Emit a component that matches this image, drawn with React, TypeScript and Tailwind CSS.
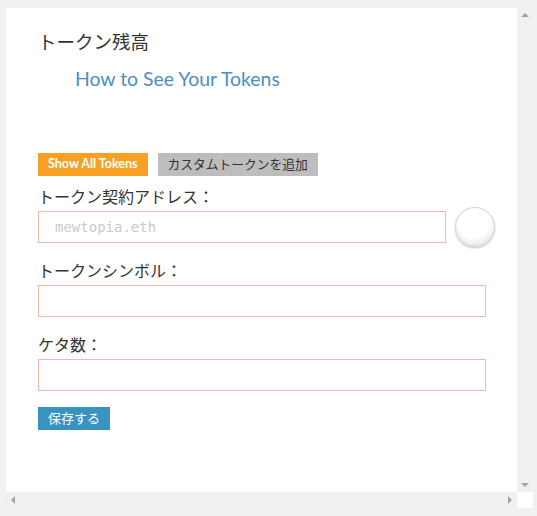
import React from "react";

const font = { fontFamily: "Lato, 'Noto Sans CJK JP', sans-serif" };

function Field({ label, placeholder, withOrb = false }: { label: string; placeholder?: string; withOrb?: boolean }) {
  return (
    <div className="flex flex-col">
      <label className="text-[16px] leading-[22px] text-[#333]">{label}</label>
      <div className="mt-[3px] flex h-[32px] items-center gap-[9px]">
        <input
          placeholder={placeholder}
          className={`h-[32px] border border-[#f5b7b1] bg-white px-[16px] text-[14px] text-[#333] outline-none placeholder:text-[#cbcbcb] ${withOrb ? "w-[408px]" : "w-[448px]"}`}
          style={{ fontFamily: "'DejaVu Sans Mono', monospace" }}
        />
        {withOrb && (
          <div className="h-[40px] w-[40px] shrink-0 rounded-full border border-[#d4d4d4] bg-[radial-gradient(circle_at_48%_38%,#ffffff_50%,#eeeeee_70%,#bdbdbd_100%)] shadow-[0_1px_2px_rgba(0,0,0,0.25)]" />
        )}
      </div>
    </div>
  );
}

export default function App() {
  return (
    <div className="h-[516px] w-[537px] overflow-hidden bg-[#f1f1f1] pl-[6px] pt-[8px]" style={font}>
      <div className="flex h-[500px] w-[527px] flex-col">
        <div className="flex h-[484px]">
          <div className="w-[511px] bg-white pl-[32px] pt-[22px]">
            <h1 className="text-[18.5px] leading-[24px] text-[#333]">トークン残高</h1>
            <a className="ml-[37px] mt-[13px] block text-[19.4px] leading-[24px] text-[#4a90c0]">How to See Your Tokens</a>

            <div className="mt-[62px] flex gap-[10px]">
              <button className="h-[23px] bg-[#f7a024] px-[10px] text-[12.5px] font-bold text-white">Show All Tokens</button>
              <button className="h-[23px] bg-[#bdbdbd] px-[10px] text-[12.75px] text-[#333]">カスタムトークンを追加</button>
            </div>

            <div className="mt-[10px] flex flex-col gap-[17px]">
              <Field label="トークン契約アドレス：" placeholder="mewtopia.eth" withOrb />
              <Field label="トークンシンボル：" />
              <Field label="ケタ数：" />
            </div>

            <button className="mt-[16px] h-[23px] bg-[#3993c1] px-[10px] text-[13px] text-white">保存する</button>
          </div>
          <div className="flex w-[16px] flex-col items-center justify-between bg-[#f0f0f0] py-[5px]">
            <div className="h-0 w-0 border-x-[4px] border-b-[4px] border-x-transparent border-b-[#a3a3a3]" />
            <div className="h-0 w-0 border-x-[4px] border-t-[4px] border-x-transparent border-t-[#a3a3a3]" />
          </div>
        </div>
        <div className="flex h-[16px]">
          <div className="flex w-[511px] items-center justify-between bg-[#f0f0f0] px-[5px]">
            <div className="h-0 w-0 border-y-[4px] border-r-[4px] border-y-transparent border-r-[#a3a3a3]" />
            <div className="h-0 w-0 border-y-[4px] border-l-[4px] border-y-transparent border-l-[#a3a3a3]" />
          </div>
          <div className="w-[16px] bg-white" />
        </div>
      </div>
    </div>
  );
}
